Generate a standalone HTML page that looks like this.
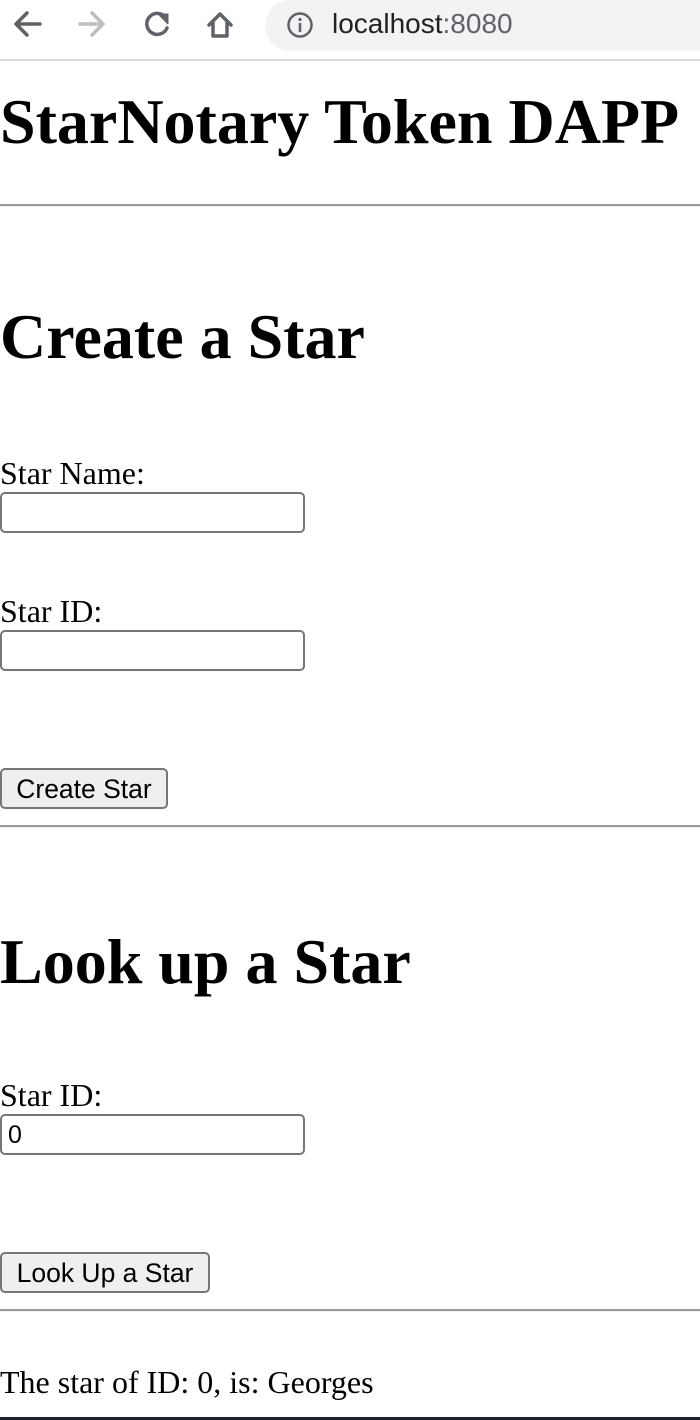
<!DOCTYPE html>
<html><head><meta charset="utf-8"><style>
*{margin:0;padding:0;box-sizing:border-box}
html,body{width:700px;height:1420px;background:#fff;overflow:hidden;position:relative}
.a{position:absolute;white-space:nowrap}
.serif{font-family:"Liberation Serif",serif;color:#000}
.h{font-size:64px;font-weight:bold;line-height:64px}
.l{font-size:32px;line-height:32px}
.in{position:absolute;left:0;width:305px;height:41px;border:2px solid #767676;border-radius:5px;background:#fff;font-family:"Liberation Sans",sans-serif;font-size:25px;padding-left:6px;line-height:39px}
.btn{position:absolute;left:0;height:41px;border:2px solid #767676;border-radius:5px;background:#efefef;font-family:"Liberation Sans",sans-serif;font-size:26.5px;line-height:38px;text-align:center;color:#000}
.hr{position:absolute;left:0;width:700px;height:3px;border-top:2px solid #9a9a9a;border-bottom:1px solid #eee}
</style></head><body>
<div class="a" style="left:0;top:0;width:700px;height:61px;background:#fff;border-bottom:2px solid #dadce0"></div>
<svg class="a" style="left:10px;top:8px" width="240" height="34" viewBox="0 0 240 34">
<g fill="none" stroke-width="3.5" stroke-linecap="round" stroke-linejoin="round">
<path d="M30 16H7M17 5L6 16L17 27" stroke="#5f6368"/>
<path d="M70 16H93M82 5L93 16L82 27" stroke="#bdbdbd"/>
<path d="M156 10A10.5 10.5 0 1 0 157 20" stroke="#5f6368"/>
<path d="M148 6L158 6L158 16Z" fill="#5f6368" stroke="#5f6368" stroke-width="1"/>
<path d="M199 17L210 6L221 17M203 15V28H217V15" stroke="#5f6368"/>
</g></svg>
<div class="a" style="left:265px;top:0;width:460px;height:51px;background:#f1f3f4;border-radius:26px"></div>
<svg class="a" style="left:286px;top:11px" width="28" height="28" viewBox="0 0 28 28"><circle cx="14" cy="14" r="11.5" fill="none" stroke="#5f6368" stroke-width="2.5"/><rect x="12.7" y="12" width="2.6" height="9" fill="#5f6368"/><circle cx="14" cy="8.5" r="1.6" fill="#5f6368"/></svg>
<div class="a" style="left:332px;top:7px;font-family:'Liberation Sans',sans-serif;font-size:28px;line-height:34px;color:#202124">localhost<span style="color:#5f6368">:8080</span></div>

<div class="a serif h" style="left:0;top:90px">StarNotary Token DAPP</div>
<div class="hr" style="top:204px"></div>
<div class="a serif h" style="left:0;top:305px">Create a Star</div>
<div class="a serif l" style="left:0;top:457px">Star Name:</div>
<div class="in" style="top:492px"></div>
<div class="a serif l" style="left:0;top:595px">Star ID:</div>
<div class="in" style="top:630px"></div>
<div class="btn" style="top:768px;width:168px">Create Star</div>
<div class="hr" style="top:825px"></div>
<div class="a serif h" style="left:0;top:930px">Look up a Star</div>
<div class="a serif l" style="left:0;top:1079px">Star ID:</div>
<div class="in" style="top:1114px">0</div>
<div class="btn" style="top:1252px;width:210px">Look Up a Star</div>
<div class="hr" style="top:1309px"></div>
<div class="a serif l" style="left:0;top:1366px">The star of ID: 0, is: Georges</div>
<div class="a" style="left:0;top:1417px;width:700px;height:3px;background:#1c2430"></div>
</body></html>
